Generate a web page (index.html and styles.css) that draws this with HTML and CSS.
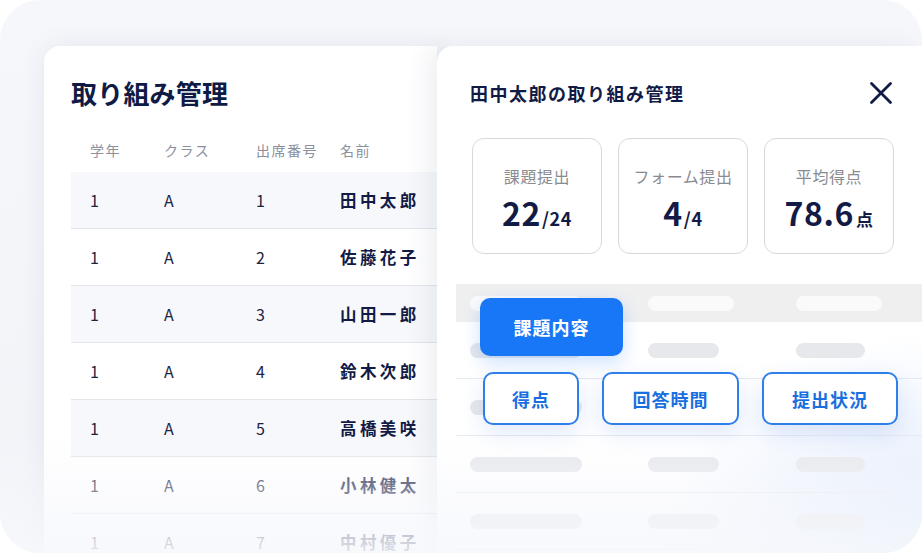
FILE: index.html
```html
<!DOCTYPE html>
<html lang="ja">
<head>
<meta charset="utf-8">
<title>取り組み管理</title>
<link rel="stylesheet" href="styles.css">
</head>
<body>
<div class="frame">
  <section class="list-card">
    <h1 class="list-title">取り組み管理</h1>
    <div class="table">
      <div class="row head"><span>学年</span><span>クラス</span><span>出席番号</span><span>名前</span></div>
      <div class="row odd"><span>1</span><span>A</span><span>1</span><span class="name">田中太郎</span></div>
      <div class="row"><span>1</span><span>A</span><span>2</span><span class="name">佐藤花子</span></div>
      <div class="row odd"><span>1</span><span>A</span><span>3</span><span class="name">山田一郎</span></div>
      <div class="row"><span>1</span><span>A</span><span>4</span><span class="name">鈴木次郎</span></div>
      <div class="row odd"><span>1</span><span>A</span><span>5</span><span class="name">高橋美咲</span></div>
      <div class="row"><span>1</span><span>A</span><span>6</span><span class="name">小林健太</span></div>
      <div class="row"><span>1</span><span>A</span><span>7</span><span class="name">中村優子</span></div>
    </div>
  </section>
  <section class="panel">
    <div class="panel-head">
      <h2 class="panel-title">田中太郎の取り組み管理</h2>
      <svg class="close" viewBox="0 0 24 24" width="24" height="24" aria-hidden="true">
        <path d="M2.5 2.5 L21.5 21.5 M21.5 2.5 L2.5 21.5" stroke="#121a46" stroke-width="2.8" stroke-linecap="round" fill="none"/>
      </svg>
    </div>
    <div class="stats">
      <div class="stat"><div class="stat-label">課題提出</div><div class="stat-value">22<small>/24</small></div></div>
      <div class="stat"><div class="stat-label">フォーム提出</div><div class="stat-value">4<small>/4</small></div></div>
      <div class="stat"><div class="stat-label">平均得点</div><div class="stat-value">78.6<small class="unit">点</small></div></div>
    </div>
    <div class="skeleton">
      <div class="sk-row sk-head"><i class="pill w1"></i><i class="pill w2h"></i><i class="pill w2h"></i></div>
      <div class="sk-row"><i class="pill w1"></i><i class="pill w2"></i><i class="pill w3"></i></div>
      <div class="sk-row"><i class="pill w1"></i><i class="pill w2"></i><i class="pill w3"></i></div>
      <div class="sk-row"><i class="pill w1"></i><i class="pill w2"></i><i class="pill w3"></i></div>
      <div class="sk-row"><i class="pill w1"></i><i class="pill w2"></i><i class="pill w3"></i></div>
      <div class="chips">
        <div class="chip primary">課題内容</div>
        <div class="chip-row">
          <div class="chip outline c1">得点</div>
          <div class="chip outline c2">回答時間</div>
          <div class="chip outline c3">提出状況</div>
        </div>
      </div>
    </div>
  </section>
  <div class="fade"></div>
</div>
</body>
</html>
```

FILE: styles.css
```css
* { box-sizing: border-box; }
html, body { margin: 0; padding: 0; }
body {
  width: 922px;
  height: 556px;
  background: #ffffff;
  font-family: "Noto Sans CJK JP", "Noto Sans", sans-serif;
  color: #121a46;
  overflow: hidden;
}
.frame {
  position: relative;
  width: 922px;
  height: 553px;
  border-radius: 40px;
  overflow: hidden;
  background: linear-gradient(180deg, #f6f7fb 0%, #f1f3f8 100%);
  display: flex;
  padding: 46px 0 0 44px;
}

/* left list card */
.list-card {
  width: 393px;
  flex-shrink: 0;
  background: #ffffff;
  border-radius: 16px 0 0 0;
  padding: 28px 0 0 27px;
  box-shadow: 0 0 26px rgba(40, 55, 100, 0.08);
}
.list-title {
  margin: 0;
  font-size: 26px;
  line-height: 38px;
  font-weight: 700;
  color: #0f1a45;
  letter-spacing: 0.2px;
}
.table { margin-top: 18px; }
.row {
  display: grid;
  grid-template-columns: 74px 92px 84px 1fr;
  padding-left: 19px;
  height: 57px;
  align-items: center;
  border-bottom: 1px solid #e3e5ea;
  font-size: 16px;
  color: #1e2340;
  white-space: nowrap;
}
.row.head {
  height: 42px;
  border-bottom: none;
  font-size: 14px;
  color: #8b8f9e;
  letter-spacing: 1.5px;
  align-items: start;
  padding-top: 10px;
}
.row.odd { background: #f6f8fb; }
.row .name {
  font-size: 16.5px;
  font-weight: 700;
  letter-spacing: 3.4px;
  color: #121a46;
}

/* right detail panel */
.panel {
  flex: 1;
  position: relative;
  background: radial-gradient(ellipse 260px 220px at 100% 100%, rgba(208, 224, 250, 0.75), rgba(208, 224, 250, 0) 100%), #ffffff;
  border-radius: 16px 0 0 0;
  box-shadow: -10px 0 24px rgba(30, 40, 80, 0.07);
  display: flex;
  flex-direction: column;
}
.panel-head {
  display: flex;
  align-items: center;
  justify-content: space-between;
  padding: 35px 29px 0 33px;
}
.panel-title {
  margin: 0;
  font-size: 18px;
  line-height: 24px;
  font-weight: 700;
  letter-spacing: 1.5px;
  color: #121a46;
}
.close { display: block; width: 24px; height: 24px; }

.stats {
  display: flex;
  gap: 16px;
  padding-left: 35px;
  margin-top: 33px;
}
.stat {
  width: 130px;
  height: 116px;
  border: 1px solid #d8d9dd;
  border-radius: 12px;
  display: flex;
  flex-direction: column;
  align-items: center;
  padding-top: 25px;
  background: #ffffff;
}
.stat-label {
  font-size: 16px;
  line-height: 24px;
  color: #8a8b90;
  letter-spacing: 0.6px;
}
.stat-value {
  margin-top: 1px;
  font-size: 32px;
  line-height: 46px;
  font-weight: 700;
  color: #121a46;
  letter-spacing: 0.6px;
}
.stat-value small {
  font-size: 18px;
  font-weight: 700;
  margin-left: 1px;
}
.stat-value small.unit { font-size: 17px; margin-left: 2px; }

/* skeleton table */
.skeleton {
  position: relative;
  margin: 30px 0 0 19px;
  flex: 1;
}
.sk-row {
  display: grid;
  grid-template-columns: 178px 148px 1fr;
  padding-left: 14px;
  height: 57px;
  align-items: center;
  border-bottom: 1px solid #e7e9ef;
}
.sk-row.sk-head {
  height: 38px;
  background: #efeff0;
  border-bottom: none;
}
.pill {
  display: block;
  height: 15px;
  border-radius: 8px;
  background: #e7e8eb;
}
.sk-head .pill { background: #fafafb; }
.pill.w1 { width: 112px; }
.pill.w2 { width: 71px; }
.pill.w2h { width: 86px; }
.pill.w3 { width: 69px; }

.chips {
  position: absolute;
  top: 14px;
  left: 24px;
  display: flex;
  flex-direction: column;
  align-items: flex-start;
  gap: 16px;
}
.chip {
  display: flex;
  align-items: center;
  justify-content: center;
  border-radius: 10px;
  font-size: 18px;
  font-weight: 700;
  letter-spacing: 1px;
}
.chip.primary {
  width: 143px;
  height: 58px;
  background: #1877f6;
  color: #ffffff;
  box-shadow: 0 6px 18px rgba(24, 119, 246, 0.22);
}
.chip-row {
  display: flex;
  gap: 23px;
  margin-left: 3px;
}
.chip.outline {
  height: 53px;
  background: #ffffff;
  border: 2px solid #2f7fea;
  color: #1a6fe0;
  box-shadow: 0 8px 22px rgba(60, 120, 230, 0.16);
}
.chip.c1 { width: 96px; }
.chip.c2 { width: 137px; }
.chip.c3 { width: 136px; }

.fade {
  position: absolute;
  left: 0;
  right: 0;
  bottom: 0;
  height: 118px;
  pointer-events: none;
  background: linear-gradient(180deg, rgba(247, 248, 252, 0) 0%, rgba(247, 248, 252, 0.55) 55%, rgba(246, 248, 252, 0.9) 100%);
}
```
